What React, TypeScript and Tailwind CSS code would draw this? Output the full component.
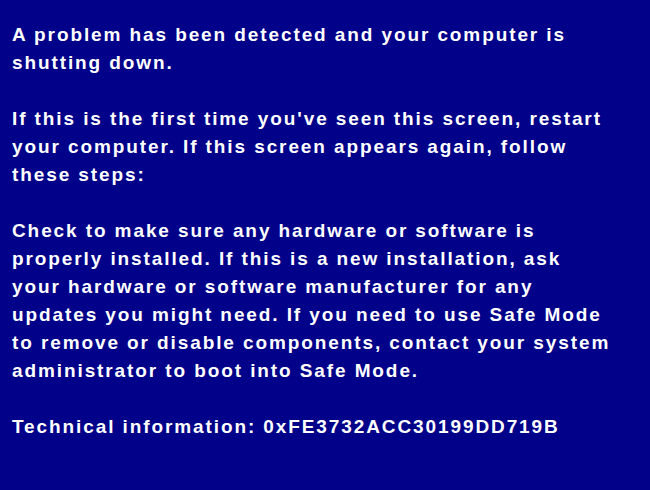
const paragraphs: string[][] = [
  ["A problem has been detected and your computer is", "shutting down."],
  [
    "If this is the first time you've seen this screen, restart",
    "your computer. If this screen appears again, follow",
    "these steps:",
  ],
  [
    "Check to make sure any hardware or software is",
    "properly installed. If this is a new installation, ask",
    "your hardware or software manufacturer for any",
    "updates you might need. If you need to use Safe Mode",
    "to remove or disable components, contact your system",
    "administrator to boot into Safe Mode.",
  ],
  ["Technical information: 0xFE3732ACC30199DD719B"],
];

export default function App() {
  return (
    <div className="h-[490px] w-[650px] overflow-hidden bg-[#010189] pl-3 pt-[21px] font-['Liberation_Sans',Arial,sans-serif] text-[19px] font-bold leading-[28px] tracking-[1.9px] text-white">
      <div className="flex flex-col gap-7">
        {paragraphs.map((p, i) => (
          <div key={i}>
            {p.map((line) => (
              <div key={line} className="whitespace-nowrap">{line}</div>
            ))}
          </div>
        ))}
      </div>
    </div>
  );
}
